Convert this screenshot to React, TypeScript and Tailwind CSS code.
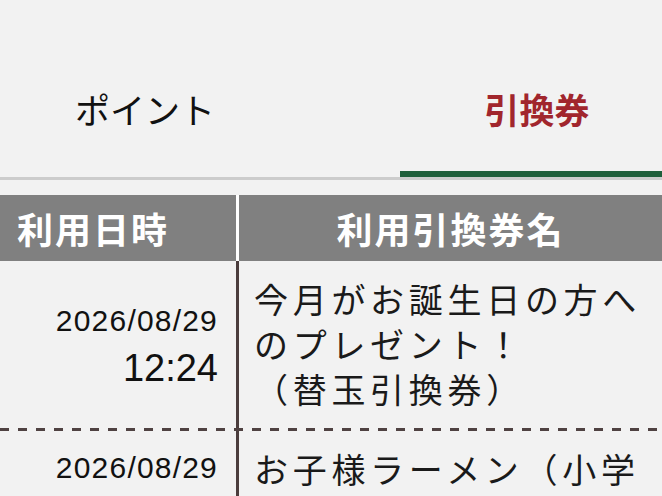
import React from 'react';

const jp = '[font-family:"Noto_Sans_CJK_JP","Noto_Sans",sans-serif]';
const num = '[font-family:"Liberation_Sans",Arial,sans-serif]';

interface HistoryRow {
  date: string;
  time: string;
  name: React.ReactNode;
}

const rows: HistoryRow[] = [
  {
    date: '2026/08/29',
    time: '12:24',
    name: (
      <>
        今月がお誕生日の方へのプレゼント！
        <br />
        （替玉引換券）
      </>
    ),
  },
  {
    date: '2026/08/29',
    time: '12:10',
    name: <>お子様ラーメン（小学生以下）無料券</>,
  },
];

function Tabs() {
  return (
    <div className="flex border-b-[3px] border-[#cccccc]">
      <button className={`flex h-[177px] w-[290px] justify-center pt-[91px] text-[35px] leading-[35px] text-[#111111] ${jp}`}>
        ポイント
      </button>
      <button
        className={`ml-auto flex h-[177px] w-[262px] justify-center border-b-[6px] border-[#1f5f3b] pl-3 pt-[91px] text-[35px] font-bold leading-[35px] text-[#a1262d] ${jp}`}
      >
        引換券
      </button>
    </div>
  );
}

function HistoryTable() {
  return (
    <div className="mt-[15px]">
      <div className={`flex h-[66px] bg-[#808080] text-[36px] font-bold leading-[66px] tracking-[2px] text-white ${jp}`}>
        <div className="w-[236px] pl-[17px]">利用日時</div>
        <div className="flex-1 border-l-[3px] border-white text-center">利用引換券名</div>
      </div>
      {rows.map((row, i) => (
        <div key={i}>
          <div className="flex">
            <div className={`flex w-[236px] flex-col items-end justify-center pr-[18px] pt-[6px] text-[#111111] ${num}`}>
              <span className="text-[30px] leading-[40px] tracking-[1.2px]">{row.date}</span>
              <span className="text-[38px] leading-[54px]">{row.time}</span>
            </div>
            <div
              className={`flex-1 border-l-[3px] border-[#4b3d3d] pb-[17px] pl-[15px] pr-[8px] pt-[15px] text-[34px] leading-[45px] tracking-[4.7px] text-[#1a1a1a] ${jp}`}
            >
              {row.name}
            </div>
          </div>
          <div className="h-[3px] bg-[repeating-linear-gradient(90deg,#4f4242_0_9px,transparent_9px_18px)]" />
        </div>
      ))}
    </div>
  );
}

export default function App() {
  return (
    <div className="min-h-screen w-full overflow-hidden bg-[#f2f2f2]">
      <Tabs />
      <HistoryTable />
    </div>
  );
}
